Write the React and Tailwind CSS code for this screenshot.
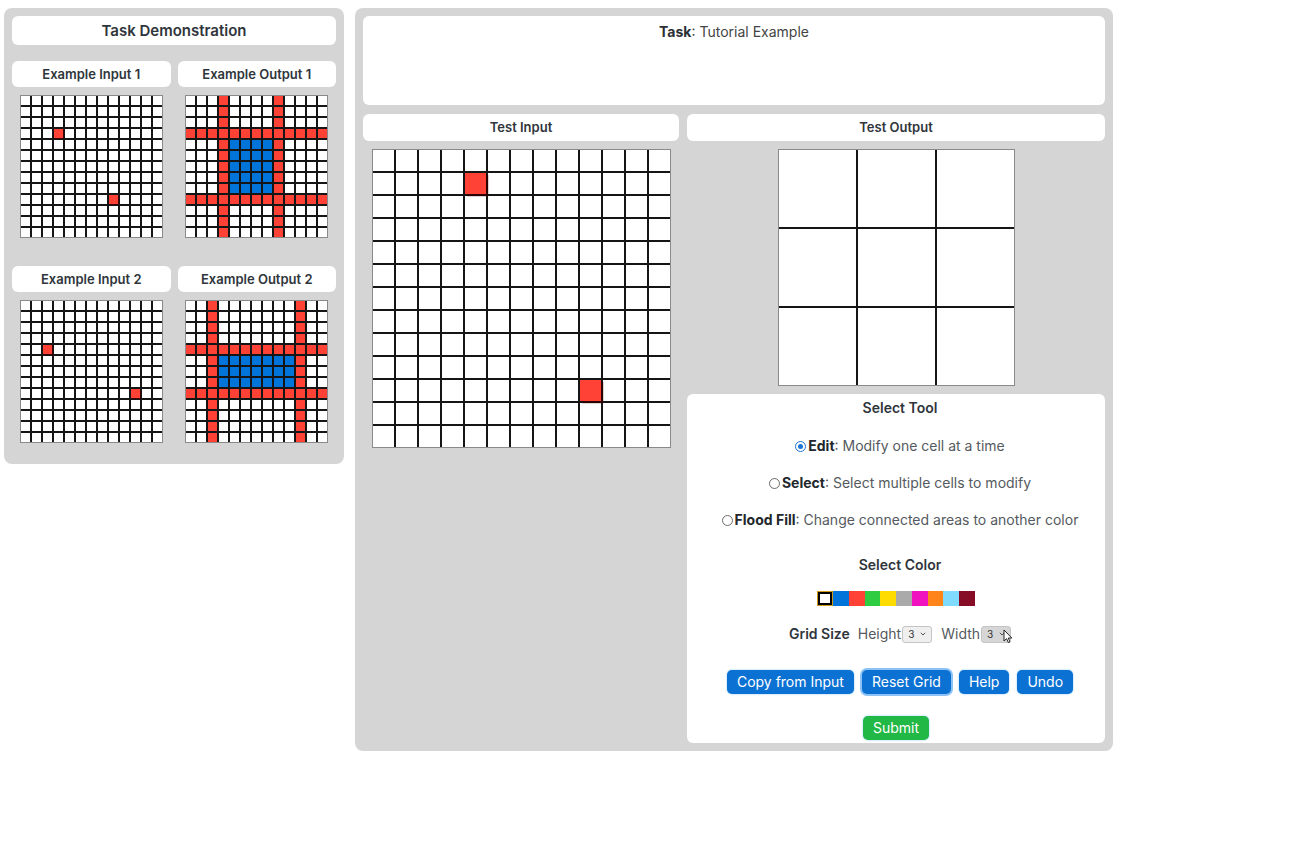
import React from 'react';

const PALETTE = ['#000000', '#0074D9', '#FF4136', '#2ECC40', '#FFDC00', '#AAAAAA', '#F012BE', '#FF851B', '#7FDBFF', '#870C25'];

function makeGrid(rows, cols, fill = 0) {
  return Array.from({ length: rows }, () => Array(cols).fill(fill));
}

function exampleOutput(r1, c1, r2, c2) {
  const g = makeGrid(13, 13);
  for (let i = 0; i < 13; i++) {
    g[r1][i] = 2;
    g[r2][i] = 2;
    g[i][c1] = 2;
    g[i][c2] = 2;
  }
  for (let r = r1 + 1; r < r2; r++) for (let c = c1 + 1; c < c2; c++) g[r][c] = 1;
  return g;
}

function withPoints(points) {
  const g = makeGrid(13, 13);
  points.forEach(([r, c]) => (g[r][c] = 2));
  return g;
}

const EXAMPLES = [
  { input: withPoints([[3, 3], [9, 8]]), output: exampleOutput(3, 3, 9, 8) },
  { input: withPoints([[4, 2], [8, 10]]), output: exampleOutput(4, 2, 8, 10) },
];

const TEST_INPUT = withPoints([[1, 4], [10, 9]]);

function Grid({ grid, cell, gap, shadow }) {
  const cols = grid[0].length;
  return (
    <div
      className="inline-grid border border-[#8a8a8a] bg-[#151515]"
      style={{ gridTemplateColumns: `repeat(${cols}, ${cell}px)`, gap: `${gap}px` }}
    >
      {grid.flat().map((v, i) => (
        <div
          key={i}
          style={{ width: cell, height: cell, backgroundColor: v === 0 ? '#ffffff' : PALETTE[v] }}
          className={v !== 0 && shadow ? `relative z-10 ${shadow}` : ''}
        />
      ))}
    </div>
  );
}

function Label({ children, className = '' }) {
  return (
    <div className={`rounded-md bg-white text-center font-semibold text-[#2f353b] ${className}`}>{children}</div>
  );
}

function Radio({ checked, title, desc }) {
  return (
    <div className="flex items-center justify-center text-[14px] leading-[18px] text-[#555a60]">
      {checked ? (
        <span className="mr-[2px] grid h-[11px] w-[11px] place-items-center rounded-full border border-[#1c74d4] bg-white">
          <span className="h-[5px] w-[5px] rounded-full bg-[#1c74d4]" />
        </span>
      ) : (
        <span className="mr-[2px] h-[11px] w-[11px] rounded-full border border-[#6b6b6b] bg-white" />
      )}
      <span className="font-bold text-[#22272c]">{title}</span>
      <span>: {desc}</span>
    </div>
  );
}

function FakeSelect({ hover }) {
  return (
    <span
      className={`ml-[1px] inline-flex h-[17px] w-[30px] items-center justify-between rounded-[3px] border border-[#c4c4c4] px-[5px] text-[10px] leading-none text-[#333] ${
        hover ? 'bg-[#d6d6d6]' : 'bg-[#efefef]'
      }`}
    >
      3
      <svg width="6" height="4" viewBox="0 0 6 4">
        <path d="M0.8 0.8 L3 3 L5.2 0.8" fill="none" stroke="#555" strokeWidth="1" />
      </svg>
    </span>
  );
}

function Btn({ children, focus, green }) {
  return (
    <button
      className={`h-[24px] rounded-[5px] px-[10px] text-[14px] leading-none text-white ${
        green ? 'bg-[#22b845]' : 'bg-[#0b72d3]'
      } ${focus ? 'ring-2 ring-[#8cc2f5]' : 'shadow-[0_0_2px_#7fc3ff]'}`}
    >
      {children}
    </button>
  );
}

export default function App() {
  return (
    <div className="flex min-h-[868px] items-start gap-[11px] bg-white pl-[4px] pt-[8px] font-['Inter','Noto_Sans',sans-serif]">
      {/* Left: demonstration */}
      <div className="flex w-[340px] flex-col rounded-[8px] bg-[#d5d5d5] px-[8px] pb-[21px] pt-[8px]">
        <Label className="h-[29px] text-[15px] leading-[29px]">Task Demonstration</Label>
        {EXAMPLES.map((ex, idx) => (
          <div key={idx} className={`grid grid-cols-2 gap-x-[7px] ${idx === 0 ? 'mt-[16px]' : 'mt-[28px]'}`}>
            <Label className="h-[26px] text-[13px] leading-[26px]">Example Input {idx + 1}</Label>
            <Label className="h-[26px] text-[13px] leading-[26px]">Example Output {idx + 1}</Label>
            <div className="mt-[8px] flex justify-center">
              <Grid grid={ex.input} cell={9} gap={2} shadow="shadow-[1px_1px_1px_#3a0000]" />
            </div>
            <div className="mt-[8px] flex justify-center">
              <Grid grid={ex.output} cell={9} gap={2} />
            </div>
          </div>
        ))}
      </div>

      {/* Right: test */}
      <div className="flex w-[758px] flex-col rounded-[8px] bg-[#d5d5d5] p-[8px]">
        <div className="h-[89px] rounded-md bg-white pt-[7px] text-center text-[14px] leading-[18px] text-[#444]">
          <span className="font-bold text-[#2b3035]">Task</span>: Tutorial Example
        </div>
        <div className="mt-[9px] flex gap-[8px]">
          <div className="flex w-[316px] flex-col">
            <Label className="h-[27px] text-[13px] leading-[27px]">Test Input</Label>
            <div className="mt-[8px] pl-[9px]">
              <Grid grid={TEST_INPUT} cell={21} gap={2} shadow="shadow-[2px_2px_1px_#2a0000]" />
            </div>
          </div>
          <div className="flex w-[418px] flex-col">
            <Label className="h-[27px] text-[13px] leading-[27px]">Test Output</Label>
            <div className="mt-[8px] flex justify-center">
              <Grid grid={makeGrid(3, 3)} cell={77} gap={2} />
            </div>
            <div className="mt-[8px] flex h-[349px] flex-col items-center rounded-md bg-white pt-[5px]">
              <div className="ml-[8px] text-[14px] font-semibold leading-[18px] text-[#2f353b]">Select Tool</div>
              <div className="ml-[8px] mt-[20px] flex flex-col gap-[19px]">
                <Radio checked title="Edit" desc="Modify one cell at a time" />
                <Radio title="Select" desc="Select multiple cells to modify" />
                <Radio title="Flood Fill" desc="Change connected areas to another color" />
              </div>
              <div className="ml-[8px] mt-[27px] text-[14px] font-semibold leading-[18px] text-[#2f353b]">Select Color</div>
              <div className="mt-[17px] flex">
                {PALETTE.map((c, i) =>
                  i === 0 ? (
                    <span key={c} className="h-[15px] w-[16px] border border-[#d19a1a] bg-black p-[2px]">
                      <span className="block h-full w-full bg-white" />
                    </span>
                  ) : (
                    <span key={c} className="h-[15px] w-[15.7px]" style={{ backgroundColor: c }} />
                  )
                )}
              </div>
              <div className="relative ml-[8px] mt-[19px] flex h-[18px] items-center text-[14px] leading-[18px] text-[#555a60]">
                <span className="mr-[8px] font-semibold text-[#2f353b]">Grid Size</span>
                <span>Height</span>
                <FakeSelect />
                <span className="ml-[9px]">Width</span>
                <FakeSelect hover />
                <svg className="absolute right-[-2px] top-[4px]" width="10" height="15" viewBox="0 0 10 15">
                  <path d="M1 1 L1 12 L3.6 9.6 L5.4 13.6 L7 12.9 L5.3 9 L8.8 9 Z" fill="#fff" stroke="#111" strokeWidth="0.9" />
                </svg>
              </div>
              <div className="ml-[8px] mt-[27px] flex gap-[8px]">
                <Btn>Copy from Input</Btn>
                <Btn focus>Reset Grid</Btn>
                <Btn>Help</Btn>
                <Btn>Undo</Btn>
              </div>
              <div className="mt-[21px]">
                <Btn green>Submit</Btn>
              </div>
            </div>
          </div>
        </div>
      </div>
    </div>
  );
}
